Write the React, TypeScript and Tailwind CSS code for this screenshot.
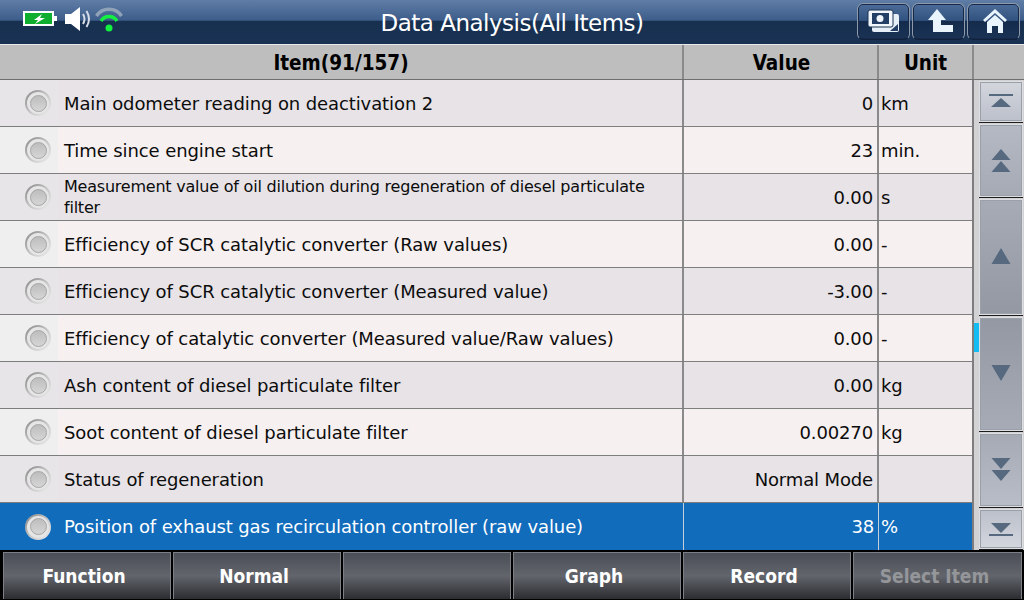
import React from "react";

const rows: [string, string, string][] = [
  ["Main odometer reading on deactivation 2", "0", "km"],
  ["Time since engine start", "23", "min."],
  ["Measurement value of oil dilution during regeneration of diesel particulate filter", "0.00", "s"],
  ["Efficiency of SCR catalytic converter (Raw values)", "0.00", "-"],
  ["Efficiency of SCR catalytic converter (Measured value)", "-3.00", "-"],
  ["Efficiency of catalytic converter (Measured value/Raw values)", "0.00", "-"],
  ["Ash content of diesel particulate filter", "0.00", "kg"],
  ["Soot content of diesel particulate filter", "0.00270", "kg"],
  ["Status of regeneration", "Normal Mode", ""],
  ["Position of exhaust gas recirculation controller (raw value)", "38", "%"],
];

const Tri = ({ down, y, h }: { down?: boolean; y: number; h: number }) => (
  <polygon points={down ? `0.500,${y} 19.500,${y} 10,${y + h}` : `10,${y} 19.500,${y + h} 0.500,${y + h}`} fill="#56697f" />
);

function ScrollBtn({ h, cls, children }: { h: string; cls: string; children: React.ReactNode }) {
  return (
    <div className={`${h} ${cls} flex items-center justify-center border border-[#dcdee2] shadow-[inset_0_0_0_1px_#9aa0aa,0_1px_0_#1c1c1c]`}>
      <svg width="26" height="30" viewBox="-3 0 26 30">{children}</svg>
    </div>
  );
}

function TopBtn({ children }: { children: React.ReactNode }) {
  return (
    <div className="w-[53px] h-[37px] rounded-[6px] border border-[#8c9aaa] border-b-[#10213a] shadow-[inset_0_0_0_1px_#16294a] bg-[linear-gradient(to_bottom,#4d6c98_0%,#31527f_47%,#142b4c_49%,#1a3355_100%)]">
      <svg width="51" height="35" viewBox="1 1 51 35">{children}</svg>
    </div>
  );
}

function FootBtn({ label, dim, w }: { label: string; dim?: boolean; w: string }) {
  return (
    <div className={`${w} h-full border-t border-x border-[#7c7f86] pr-[6px] bg-gradient-to-b from-[#4b4e56] via-[#62656c] to-[#2c2d31] flex items-center justify-center font-bold text-[19px] font-['DejaVu_Sans_Condensed',sans-serif] ${dim ? "text-[#94969a]" : "text-white"}`}>
      {label}
    </div>
  );
}

export default function App() {
  return (
    <div className="w-[1024px] h-[600px] overflow-hidden flex flex-col bg-black font-['DejaVu_Sans',sans-serif] text-[#0c0c0c]">
      <header className="h-[44px] shrink-0 relative flex items-center justify-center bg-[linear-gradient(to_bottom,#5f7da6_0%,#3d5d8a_46%,#17304f_48%,#1a3355_100%)]">
        <div className="absolute left-[23px] top-[6px] flex items-center">
          <svg className="mb-[3px]" width="34" height="18" viewBox="0 0 34 18">
            <rect x="1" y="3" width="29" height="13" fill="#0fae2e" stroke="#fff" strokeWidth="2" />
            <rect x="31" y="7" width="3" height="5" fill="#fff" />
            <polygon points="19,5 11,11 15,11 12,15 22,9 17,9" fill="#fff" />
          </svg>
          <svg className="ml-[7px]" width="28" height="26" viewBox="0 0 28 26">
            <polygon points="1,8 7,8 16,1 16,25 7,18 1,18" fill="#fff" />
            <path d="M19 8q3 5 0 10M22.500 5q5 8 0 16" stroke="#d7dde6" strokeWidth="2" fill="none" />
          </svg>
          <svg className="ml-[3px]" width="28" height="26" viewBox="0 0 28 26">
            <path d="M1.500 10a15 15 0 0 1 25 0" stroke="#8fa2b8" strokeWidth="3.500" fill="none" />
            <path d="M6 15a9.500 9.500 0 0 1 16 0" stroke="#14f040" strokeWidth="3.500" fill="none" />
            <circle cx="14" cy="22" r="3.500" fill="#14f040" />
          </svg>
        </div>
        <span className="text-white text-[23px] tracking-[-0.5px] mt-[2px]">Data Analysis(All Items)</span>
        <div className="absolute right-[4px] top-[3px] flex gap-[2px]">
          <TopBtn>
            <rect x="15" y="11" width="27" height="18" rx="2" fill="#e6eef8" />
            <rect x="11" y="7" width="25" height="17" rx="2" fill="#f0f6fc" stroke="#1b3353" />
            <rect x="15" y="10" width="17" height="11" fill="#243f66" />
            <circle cx="23" cy="15.500" r="3.500" fill="#f0f6fc" />
            <polygon points="41,21 41,28 33,28" fill="#243f66" />
          </TopBtn>
          <TopBtn>
            <polygon points="25,6 34,17 29,17 29,22 41,22 41,29 21,29 21,17 16,17" fill="#eaf4fd" />
          </TopBtn>
          <TopBtn>
            <path d="M28 6L40 17L38 19L28 10L18 19L16 17Z" fill="#eaf4fd" />
            <path d="M28 12L36 19V30H31V23H25V30H20V19Z" fill="#eaf4fd" />
          </TopBtn>
        </div>
      </header>

      <div className="h-[36px] shrink-0 flex bg-[#bebebe] border-y border-[#e9e9e9] border-b-[#6f6f6f] font-bold text-[20.500px] text-black font-['DejaVu_Sans_Condensed',sans-serif]">
        <div className="w-[684px] flex items-center justify-center border-r-2 border-[#8a8a8a] pt-[3px]">Item(91/157)</div>
        <div className="w-[195px] flex items-center justify-center border-r-2 border-[#8a8a8a] pt-[3px] pl-[2px]">Value</div>
        <div className="w-[93px] flex items-center justify-center pt-[3px]">Unit</div>
        <div className="flex-1 border-l-2 border-[#8a8a8a]" />
      </div>

      <div className="flex h-[470px] shrink-0">
        <div className="w-[972px]">
          {rows.map(([name, val, unit], i) => {
            const sel = i === 9;
            const bg = sel ? "bg-[#116cbc] text-white" : i % 2 ? "bg-[#f7f0f0]" : "bg-[#e7e3e7]";
            const lead = sel ? "" : i % 2 ? "bg-[#efefef]" : "bg-[#e7e5e7]";
            const line = sel ? "border-[#c4cfda] border-r" : "border-[#8a8a8a] border-r-2";
            return (
              <div key={i} className={`h-[47px] flex ${bg} ${sel ? "" : "border-b border-[#7e7e7e]"}`}>
                <div className={`w-[58px] shrink-0 flex items-center pl-[25px] ${lead}`}>
                  <div className="w-[26px] h-[26px] shrink-0 rounded-full bg-gradient-to-br from-[#858585] via-[#c4c4c4] to-[#f0f0f0] flex items-center justify-center">
                    <div className="w-[22px] h-[22px] rounded-full bg-[#e6e6e6] flex items-center justify-center">
                      <div className="w-[17px] h-[17px] rounded-full bg-gradient-to-b from-[#bdbdbd] to-[#d6d6d6] border border-[#a5a5a5]" />
                    </div>
                  </div>
                </div>
                <div className={`w-[626px] flex items-center ${line} pl-[6px] pr-[10px] ${i === 2 ? "text-[16px] leading-[21px] tracking-[-0.22px]" : "text-[18px] tracking-[-0.1px]"}`}>
                  <span>{name}</span>
                </div>
                <div className={`w-[195px] flex items-center justify-end pr-[4px] ${line} text-[18px] tracking-[-0.14px]`}>{val}</div>
                <div className="w-[93px] flex items-center pl-[2px] text-[18px] tracking-[-0.14px]">{unit}</div>
              </div>
            );
          })}
        </div>
        <div className="relative flex-1 bg-[#d2d2d4] border-l-2 border-[#7e7e7e] pl-[5px] pr-[1px] flex flex-col gap-[2px] pt-[1px]">
          <div className="absolute left-[0px] top-[243px] w-[5px] h-[29px] bg-[#13bcf3]" />
          <ScrollBtn h="h-[41px]" cls="bg-gradient-to-b from-[#d3d6dd] to-[#bcc0ca]">
            <rect x="-2" y="7" width="24" height="2" fill="#56697f" />
            <polygon points="0,20 20,20 10,11" fill="#56697f" />
          </ScrollBtn>
          <ScrollBtn h="h-[73px]" cls="bg-gradient-to-b from-[#b5b9c4] to-[#a6aab5]">
            <Tri y={3} h={11} />
            <Tri y={15} h={11} />
          </ScrollBtn>
          <ScrollBtn h="h-[116px]" cls="bg-gradient-to-b from-[#a7abb6] to-[#9498a3]">
            <Tri y={6} h={16} />
          </ScrollBtn>
          <ScrollBtn h="h-[114px]" cls="bg-gradient-to-b from-[#9498a3] to-[#a7abb6]">
            <Tri down y={6} h={16} />
          </ScrollBtn>
          <ScrollBtn h="h-[74px]" cls="bg-gradient-to-b from-[#a6aab5] to-[#b9bdc8]">
            <Tri down y={3} h={11} />
            <Tri down y={15} h={11} />
          </ScrollBtn>
          <ScrollBtn h="h-[40px]" cls="bg-gradient-to-b from-[#bcc0ca] to-[#d3d6dd]">
            <polygon points="0,9 20,9 10,19" fill="#56697f" />
            <rect x="-2" y="20" width="24" height="2" fill="#56697f" />
          </ScrollBtn>
        </div>
      </div>

      <footer className="flex-1 flex gap-[2px] pl-[3px] pr-[2px] pt-[2px] pb-[1px] bg-black">
        <FootBtn w="w-[168px]" label="Function" />
        <FootBtn w="w-[168px]" label="Normal" />
        <FootBtn w="w-[168px]" label="" />
        <FootBtn w="w-[168px]" label="Graph" />
        <FootBtn w="w-[168px]" label="Record" />
        <FootBtn w="w-[169px]" label="Select Item" dim />
      </footer>
    </div>
  );
}
